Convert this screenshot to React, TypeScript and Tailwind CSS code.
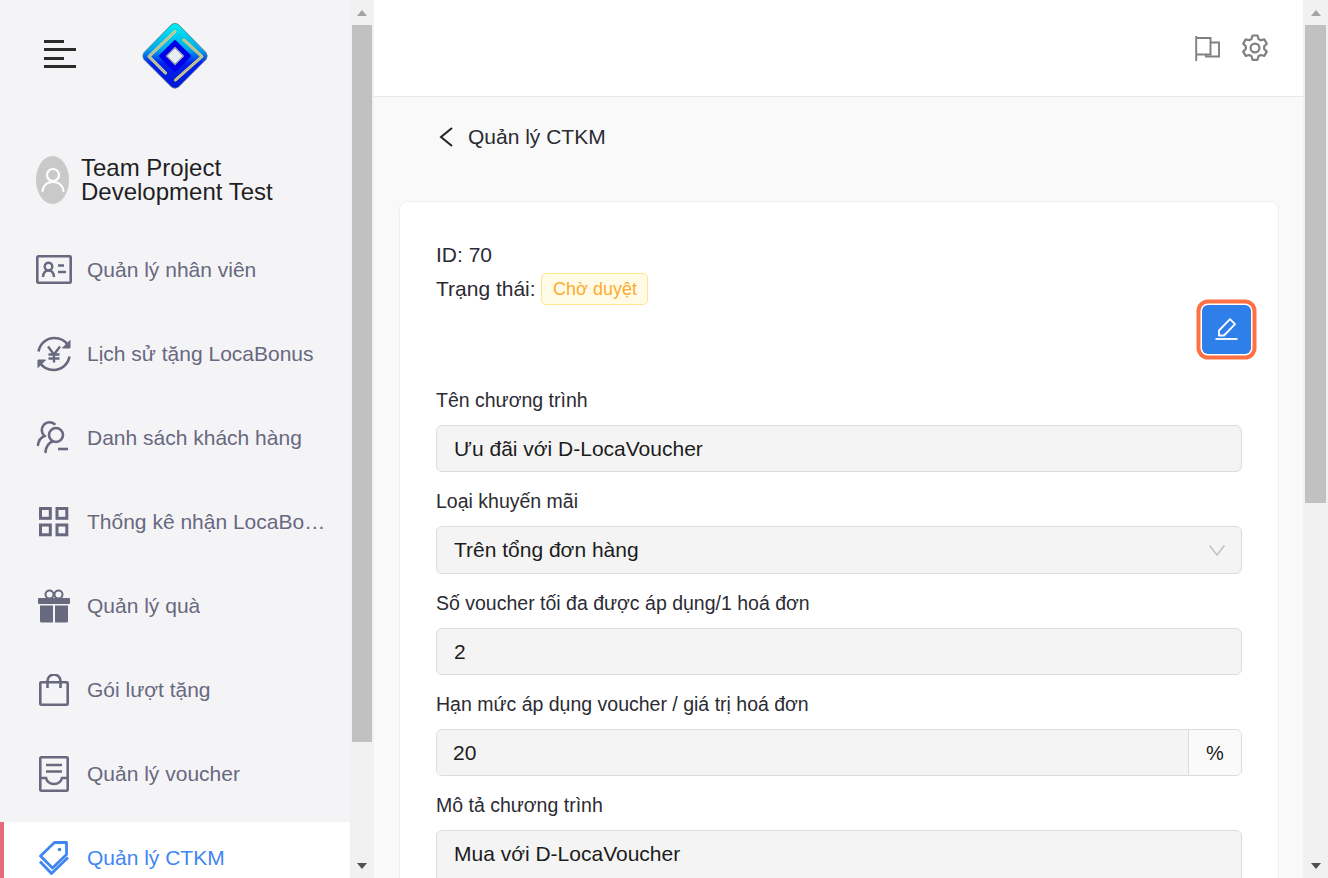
import type { ReactNode } from "react";

const font = { fontFamily: '"Liberation Sans", Arial, sans-serif' };

function Logo() {
  return (
    <svg width="70" height="70" viewBox="-3 -3 70 70" className="block">
      <defs>
        <linearGradient id="logoFill" x1="0" y1="0" x2="0" y2="1">
          <stop offset="0" stopColor="#00f0f0" />
          <stop offset="0.4" stopColor="#00a8f0" />
          <stop offset="0.62" stopColor="#0020f0" />
          <stop offset="1" stopColor="#0018d8" />
        </linearGradient>
      </defs>
      <path d="M28.500 1.500Q32 -1 35.500 1.500L63 29.500Q65.500 33 63 36.500L35.500 64Q32 66.500 28.500 64L1 36.500Q-1.500 33 1 29.500Z" fill="url(#logoFill)" stroke="#60788c" strokeWidth="0.800" />
      <path d="M32 8.500L6 33.500L22.500 50" fill="none" stroke="#f0e060" strokeWidth="3" strokeLinecap="round" strokeLinejoin="round" />
      <path d="M32 8.500L6 33.500L22.500 50" fill="none" stroke="#a8b4c0" strokeWidth="1.400" strokeLinecap="round" strokeLinejoin="round" />
      <path d="M41 17L59 33.500L32.500 57" fill="none" stroke="#f4e040" strokeWidth="3" strokeLinecap="round" strokeLinejoin="round" />
      <path d="M41 17L59 33.500L32.500 57" fill="none" stroke="#a8b4c0" strokeWidth="1.400" strokeLinecap="round" strokeLinejoin="round" />
      <path d="M32 18.500L46.500 33L32 47.500L17.500 33Z" fill="#0000e8" stroke="#0000e8" strokeWidth="3" strokeLinejoin="round" />
      <path d="M32 24.500L40.500 33L32 41.500L23.500 33Z" fill="#e8edf2" stroke="#8c9cb4" strokeWidth="1.400" strokeLinejoin="round" />
    </svg>
  );
}

function IdCardIcon() {
  return (
    <svg width="36" height="30" viewBox="0 0 36 30" fill="none" stroke="currentColor">
      <rect x="1.300" y="1.300" width="33.400" height="26.400" rx="1" strokeWidth="2.600" />
      <circle cx="12.500" cy="11.500" r="3.800" strokeWidth="2.400" />
      <path d="M7 22c.3-4 2.500-6.500 5.500-6.500S17.700 18 18 22" strokeWidth="2.400" />
      <path d="M22 10.500h6M22 17h8" strokeWidth="2.400" />
    </svg>
  );
}

function YenCycleIcon() {
  return (
    <svg width="36" height="36" viewBox="0 0 36 36" fill="none" stroke="currentColor" strokeWidth="2.600">
      <path d="M2.500 15.500C4 7.500 10.500 2 18.500 2c5.500 0 10.500 2.700 13.500 7" />
      <path d="M33.500 20.500C32 28.500 25.500 34 17.500 34c-5.500 0-10.500-2.700-13.500-7" />
      <path d="M34 4.500V12h-7.500z" fill="currentColor" strokeWidth="1" />
      <path d="M2 31.500V24h7.500z" fill="currentColor" strokeWidth="1" />
      <path d="M12 10.500l6 8 6-8M18 18.500V26.500M12.500 18.500h11M12.500 22.500h11" strokeWidth="2.400" />
    </svg>
  );
}

function UserSearchIcon() {
  return (
    <svg width="36" height="36" viewBox="0 0 36 36" fill="none" stroke="currentColor" strokeWidth="2.600">
      <path d="M2 25c.5-4 3-7.500 6.500-9C5 13 5 8 8 4.500 11 1.500 15.500 1.500 18.500 4" strokeLinecap="round" />
      <circle cx="20" cy="15" r="7" />
      <path d="M9.500 32c.5-5 3-9 7-10.500" strokeLinecap="round" />
      <path d="M22 29h10" />
    </svg>
  );
}

function GridIcon() {
  return (
    <svg width="30" height="30" viewBox="0 0 30 30" fill="none" stroke="currentColor" strokeWidth="3">
      <rect x="1.500" y="1.500" width="9.800" height="9.800" />
      <rect x="18" y="1.500" width="9.800" height="9.800" />
      <rect x="1.500" y="18" width="9.800" height="9.800" />
      <rect x="18" y="18" width="9.800" height="9.800" />
    </svg>
  );
}

function GiftIcon() {
  return (
    <svg width="32" height="34" viewBox="0 0 32 34" fill="currentColor">
      <circle cx="11.500" cy="5.500" r="4" fill="none" stroke="currentColor" strokeWidth="2" />
      <circle cx="20.500" cy="5.500" r="4" fill="none" stroke="currentColor" strokeWidth="2" />
      <rect x="0" y="9" width="32" height="6" rx="1" />
      <path d="M2 16.500h13v17H3.500A1.500 1.500 0 0 1 2 32zM17 16.500h13V32a1.500 1.500 0 0 1-1.500 1.500H17z" />
    </svg>
  );
}

function BagIcon() {
  return (
    <svg width="30" height="32" viewBox="0 0 30 32" fill="none" stroke="currentColor" strokeWidth="2.600">
      <rect x="1.300" y="8.300" width="27.400" height="22.400" rx="1" />
      <path d="M8.500 14V7a6.500 6.500 0 0 1 13 0v7" />
    </svg>
  );
}

function VoucherIcon() {
  return (
    <svg width="30" height="36" viewBox="0 0 30 36" fill="none" stroke="currentColor" strokeWidth="2.600">
      <rect x="1.300" y="1.300" width="27.400" height="33.400" rx="1" />
      <path d="M7 9h16M7 15.500h16" />
      <path d="M1.500 22H7c1 4 4 6 8 6s7-2 8-6h5.500" />
    </svg>
  );
}

function TagsIcon() {
  return (
    <svg width="32" height="36" viewBox="0 0 32 36" fill="none" stroke="currentColor" strokeWidth="2.800" strokeLinejoin="round">
      <path d="M2.500 16L16.500 2.500H28.500V14.500L14.500 28Z" />
      <circle cx="21.500" cy="9.500" r="1.800" fill="currentColor" stroke="none" />
      <path d="M2 21.500L13.500 33.500L30 17.500" />
    </svg>
  );
}

function FlagIcon() {
  return (
    <svg width="26" height="26" viewBox="0 0 26 26" fill="none" stroke="#808080" strokeWidth="1.900">
      <path d="M1.200 1V26" />
      <path d="M1.200 3H15.500V19.500H1.200" />
      <path d="M15.500 7.500H24V21.500H11V19.500" />
    </svg>
  );
}

function GearIcon() {
  return (
    <svg width="26" height="28" viewBox="0 0 26 28" fill="none" stroke="#808080" strokeWidth="2.200" strokeLinejoin="round">
      <path d="M10.500 1.500h5l1 3.500 2.300 1.300 3.500-.9 2.500 4.300-2.600 2.600v2.700l2.600 2.600-2.500 4.300-3.500-.9-2.300 1.300-1 3.500h-5l-1-3.500-2.300-1.300-3.500.9-2.500-4.300 2.600-2.600v-2.700L1.200 9.700l2.500-4.300 3.500.9 2.300-1.300z" />
      <circle cx="13" cy="14" r="4.400" />
    </svg>
  );
}

function PencilIcon() {
  return (
    <svg width="24" height="24" viewBox="0 0 24 24" fill="none" stroke="#fff" strokeWidth="1.800">
      <path d="M4 17.500V12.500L15 1.200L20 6.200L9 17.500Z" strokeLinejoin="round" />
      <path d="M0.500 21H22.500" />
    </svg>
  );
}

const menu: { label: string; icon: ReactNode; active?: boolean }[] = [
  { label: "Quản lý nhân viên", icon: <IdCardIcon /> },
  { label: "Lịch sử tặng LocaBonus", icon: <YenCycleIcon /> },
  { label: "Danh sách khách hàng", icon: <UserSearchIcon /> },
  { label: "Thống kê nhận LocaBonus", icon: <GridIcon /> },
  { label: "Quản lý quà", icon: <GiftIcon /> },
  { label: "Gói lượt tặng", icon: <BagIcon /> },
  { label: "Quản lý voucher", icon: <VoucherIcon /> },
  { label: "Quản lý CTKM", icon: <TagsIcon />, active: true },
];

function Scrollbar({ thumb, className }: { thumb: string; className: string }) {
  return (
    <div className={`flex h-full shrink-0 flex-col bg-[#f1f1f1] ${className}`}>
      <div className="flex h-[25px] shrink-0 items-center justify-center">
        <div className="h-0 w-0 border-x-[5.500px] border-b-[6px] border-x-transparent border-b-[#a3a3a3]" />
      </div>
      <div className={`mx-[2px] bg-[#c1c1c1] ${thumb}`} />
      <div className="mt-auto flex h-[25px] shrink-0 items-center justify-center">
        <div className="h-0 w-0 border-x-[5.500px] border-t-[6px] border-x-transparent border-t-[#505050]" />
      </div>
    </div>
  );
}

function Sidebar() {
  return (
    <aside className="flex h-full w-[350px] shrink-0 flex-col overflow-hidden bg-[#f4f4f7]">
      <div className="flex h-[110px] shrink-0 items-center pl-[44px] pb-[1px]">
        <div className="mt-[-1px] flex w-[32px] flex-col gap-[5.500px]">
          <div className="h-[3px] w-[20px] bg-[#2b2b2b]" />
          <div className="h-[3px] w-[32px] bg-[#2b2b2b]" />
          <div className="h-[3px] w-[20px] bg-[#2b2b2b]" />
          <div className="h-[3px] w-[32px] bg-[#2b2b2b]" />
        </div>
        <div className="ml-[64px]">
          <Logo />
        </div>
      </div>
      <div className="mt-[46px] flex shrink-0 items-center pl-[36px]">
        <div className="flex h-[48px] w-[33px] items-center justify-center rounded-[50%] bg-[#c9c9c9]">
          <svg width="24" height="26" viewBox="0 0 24 26" fill="none" stroke="#fff" strokeWidth="2.200">
            <circle cx="12" cy="8" r="6" />
            <path d="M1.500 24c1-6 5-9 10.500-9s9.500 3 10.500 9" strokeLinecap="round" />
          </svg>
        </div>
        <div className="ml-[12px] text-[24px] leading-[24px] text-[#1f1f24]">
          Team Project
          <br />
          Development Test
        </div>
      </div>
      <nav className="mt-[30px] flex flex-col gap-[12px]">
        {menu.map((item) => (
          <a
            key={item.label}
            className={`flex h-[72px] shrink-0 items-center border-l-[4px] pl-[32px] pr-[22px] ${
              item.active ? "border-[#e66a78] bg-white text-[#3f86f2]" : "border-transparent text-[#68687f]"
            }`}
          >
            <span className="flex w-[36px] shrink-0 justify-center">{item.icon}</span>
            <span className="ml-[15px] truncate text-[21px]">{item.label}</span>
          </a>
        ))}
      </nav>
    </aside>
  );
}

function Field({ label, children }: { label: string; children: ReactNode }) {
  return (
    <div className="mb-[14px]">
      <label className="mb-[10px] block h-[30px] text-[19.500px] leading-[30px] text-[#2b2b33]">{label}</label>
      {children}
    </div>
  );
}

function ReadonlyInput({ value }: { value: string }) {
  return (
    <div className="flex h-[47px] items-center rounded-[6px] border border-[#dcdcdc] bg-[#f4f4f4] px-[17px] text-[21px] text-[#1c1c1c]">
      {value}
    </div>
  );
}

function Main() {
  return (
    <main className="flex h-full min-w-0 flex-1 flex-col overflow-hidden bg-[#f9f9f9]">
      <header className="flex h-[97px] shrink-0 items-center justify-end gap-[21px] border-b border-[#e8e8e8] bg-white pr-[35px]">
        <FlagIcon />
        <GearIcon />
      </header>
      <div className="flex h-[104px] shrink-0 items-start pl-[65px] pt-[25px]">
        <div className="flex h-[30px] items-center text-[21px] text-[#2b2b33]">
          <svg width="14" height="20" viewBox="0 0 14 20" fill="none" stroke="#222" strokeWidth="2">
            <path d="M13 1L2 10L13 19" />
          </svg>
          <span className="ml-[15px]">Quản lý CTKM</span>
        </div>
      </div>
      <section className="ml-[25px] mr-[24px] rounded-t-[8px] border border-[#f0f0f0] bg-white px-[36px] pt-[38px]">
        <div className="h-[30px] text-[21px] leading-[30px] text-[#2b2b33]">ID: 70</div>
        <div className="mt-[3px] flex h-[32px] items-center text-[21px] text-[#2b2b33]">
          Trạng thái:
          <span className="ml-[5px] flex h-[32px] items-center rounded-[5px] border border-[#ffe58f] bg-[#fffbe6] pl-[11.500px] pr-[10.500px] text-[18px] text-[#fdab2f]">
            Chờ duyệt
          </span>
        </div>
        <div className="mb-[31px] -mr-[9px] flex justify-end">
          <button className="flex h-[49px] w-[49px] items-center justify-center rounded-[6px] bg-[#2f7fea] shadow-[0_0_0_1.500px_#fff,0_0_0_5.500px_#ff7043]">
            <PencilIcon />
          </button>
        </div>
        <Field label="Tên chương trình">
          <ReadonlyInput value="Ưu đãi với D-LocaVoucher" />
        </Field>
        <Field label="Loại khuyến mãi">
          <div className="flex h-[48px] items-center justify-between rounded-[6px] border border-[#dcdcdc] bg-[#f4f4f4] pl-[17px] pr-[16px] text-[21px] text-[#1c1c1c]">
            Trên tổng đơn hàng
            <svg width="16" height="11" viewBox="0 0 16 11" fill="none" stroke="#bdbdbd" strokeWidth="1.300">
              <path d="M0.500 0.500L8 10L15.500 0.500" />
            </svg>
          </div>
        </Field>
        <Field label="Số voucher tối đa được áp dụng/1 hoá đơn">
          <ReadonlyInput value="2" />
        </Field>
        <Field label="Hạn mức áp dụng voucher / giá trị hoá đơn">
          <div className="flex h-[47px] rounded-[6px] border border-[#dcdcdc] text-[21px] text-[#1c1c1c]">
            <div className="flex flex-1 items-center rounded-l-[6px] bg-[#f4f4f4] px-[16px]">20</div>
            <div className="flex w-[53px] items-center justify-center rounded-r-[6px] border-l border-[#dcdcdc] bg-[#fafafa] text-[20px]">%</div>
          </div>
        </Field>
        <Field label="Mô tả chương trình">
          <div className="h-[120px] rounded-[6px] border border-[#dcdcdc] bg-[#f4f4f4] px-[17px] pt-[7px] text-[21px] text-[#1c1c1c]">
            Mua với D-LocaVoucher
          </div>
        </Field>
      </section>
    </main>
  );
}

export default function App() {
  return (
    <div className="flex h-[878px] w-[1328px] overflow-hidden bg-white" style={font}>
      <Sidebar />
      <Scrollbar className="w-[24px]" thumb="h-[717px]" />
      <Main />
      <Scrollbar className="w-[25px]" thumb="h-[478px]" />
    </div>
  );
}
